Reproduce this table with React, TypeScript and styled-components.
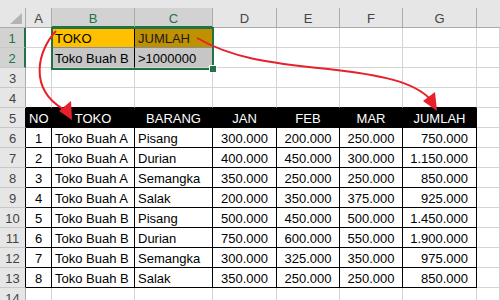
import styled, { createGlobalStyle } from "styled-components";

const GlobalStyle = createGlobalStyle`
  html, body {
    margin: 0;
    padding: 0;
    background: #ffffff;
    overflow: hidden;
  }
  body {
    font-family: "Liberation Sans", Arial, sans-serif;
  }
`;

type Align = "left" | "center" | "right";

type CellData = {
  text?: string;
  align?: Align;
  bg?: string;
  color?: string;
  right?: string;
  bottom?: string;
};

const COLS = ["A", "B", "C", "D", "E", "F", "G", ""];
const SELECTED_COLS = ["B", "C"];

const rows: { values: string[] }[] = [
  { values: ["1", "Toko Buah A", "Pisang", "300.000", "200.000", "250.000", "750.000"] },
  { values: ["2", "Toko Buah A", "Durian", "400.000", "450.000", "300.000", "1.150.000"] },
  { values: ["3", "Toko Buah A", "Semangka", "350.000", "250.000", "250.000", "850.000"] },
  { values: ["4", "Toko Buah A", "Salak", "200.000", "350.000", "375.000", "925.000"] },
  { values: ["5", "Toko Buah B", "Pisang", "500.000", "450.000", "500.000", "1.450.000"] },
  { values: ["6", "Toko Buah B", "Durian", "750.000", "600.000", "550.000", "1.900.000"] },
  { values: ["7", "Toko Buah B", "Semangka", "300.000", "325.000", "350.000", "975.000"] },
  { values: ["8", "Toko Buah B", "Salak", "350.000", "250.000", "250.000", "850.000"] },
];

const headers = ["NO", "TOKO", "BARANG", "JAN", "FEB", "MAR", "JUMLAH"];
const dataAlign: Align[] = ["center", "left", "left", "center", "center", "center", "right"];

function buildSheet(): CellData[][] {
  const empty = (): CellData[] => COLS.map(() => ({}));
  const sheet: CellData[][] = [];

  const r1 = empty();
  r1[1] = { text: "TOKO", bg: "#ffc000", right: "#000", bottom: "#8c8c8c" };
  r1[2] = { text: "JUMLAH", bg: "#bf9000", color: "#1a1a1a", bottom: "#8c8c8c" };
  sheet.push(r1);

  const r2 = empty();
  r2[1] = { text: "Toko Buah B", bg: "#c6c6c6", right: "#000" };
  r2[2] = { text: ">1000000", bg: "#c6c6c6" };
  sheet.push(r2);

  sheet.push(empty());
  const r4 = empty();
  for (let i = 0; i < 7; i++) r4[i] = { bottom: "#000" };
  sheet.push(r4);

  const r5 = empty();
  headers.forEach((h, i) => {
    r5[i] = { text: h, align: "center", bg: "#000", color: "#fff", right: "#000", bottom: "#000" };
  });
  sheet.push(r5);

  rows.forEach((row) => {
    const r = empty();
    row.values.forEach((v, i) => {
      r[i] = { text: v, align: dataAlign[i], right: "#000", bottom: "#000" };
    });
    sheet.push(r);
  });

  sheet.push(empty());
  return sheet;
}

export default function App() {
  const sheet = buildSheet();

  return (
    <>
      <GlobalStyle />
      <Sheet>
        <TopStrip />
        <Grid>
          <Corner>
            <CornerTriangle />
          </Corner>
          {COLS.map((c, i) => (
            <ColHead key={`h${i}`} $selected={SELECTED_COLS.includes(c)} $last={i === COLS.length - 1}>
              {c}
            </ColHead>
          ))}

          {sheet.map((row, r) => {
            const num = r + 1;
            const edge = num <= 2 ? "green" : num >= 5 && num <= 13 ? "black" : "gray";
            return [
              <RowHead key={`r${num}`} $selected={num <= 2} $edge={edge}>
                {num}
              </RowHead>,
              ...row.map((cell, c) => (
                <Cell
                  key={`c${num}-${c}`}
                  $align={cell.align ?? "left"}
                  $bg={cell.bg}
                  $color={cell.color}
                  $right={cell.right}
                  $bottom={cell.bottom}
                >
                  {cell.text}
                </Cell>
              )),
            ];
          })}
        </Grid>

        <Selection>
          <FillHandle />
        </Selection>

        <Arrows viewBox="0 0 500 300" width={500} height={300}>
          <path d="M56,31 C38,50 28,88 63,109" fill="none" stroke="#e8202a" strokeWidth={2} />
          <polygon points="59,111 71,101 72,120" fill="#e8202a" />
          <path
            d="M197,38 C232,58 268,63 328,69 C382,75 414,82 430,99"
            fill="none"
            stroke="#e8202a"
            strokeWidth={2}
          />
          <polygon points="423,101 435,92 437,111" fill="#e8202a" />
        </Arrows>
      </Sheet>
    </>
  );
}

const Sheet = styled.div`
  position: relative;
  width: 500px;
  height: 300px;
  overflow: hidden;
  background: #ffffff;
`;

const TopStrip = styled.div`
  height: 8px;
  background: #e6e6e6;
`;

const Grid = styled.div`
  display: grid;
  grid-template-columns: 26px 26px 83px 78px 64px 63px 63px 74px 1fr;
  grid-template-rows: 20px;
  grid-auto-rows: 20px;
  font-size: 13px;
`;

const Corner = styled.div`
  position: relative;
  background: #e6e6e6;
  border-right: 1px solid #ababab;
  border-bottom: 1px solid #ababab;
  box-sizing: border-box;
`;

const CornerTriangle = styled.div`
  position: absolute;
  right: 3px;
  bottom: 3px;
  width: 0;
  height: 0;
  border-left: 12px solid transparent;
  border-bottom: 11px solid #b4b4b4;
`;

const ColHead = styled.div<{ $selected?: boolean; $last?: boolean }>`
  box-sizing: border-box;
  display: flex;
  align-items: center;
  justify-content: center;
  padding-top: 2px;
  background: ${(p) => (p.$selected ? "#d2d2d2" : "#e6e6e6")};
  color: ${(p) => (p.$selected ? "#217346" : "#444444")};
  border-right: ${(p) => (p.$last ? "none" : "1px solid #ababab")};
  border-bottom: ${(p) => (p.$selected ? "2px solid #217346" : "1px solid #ababab")};
`;

const RowHead = styled.div<{ $selected?: boolean; $edge: "green" | "black" | "gray" }>`
  box-sizing: border-box;
  display: flex;
  align-items: center;
  justify-content: center;
  padding-top: 1px;
  background: ${(p) => (p.$selected ? "#d2d2d2" : "#e6e6e6")};
  color: ${(p) => (p.$selected ? "#217346" : "#444444")};
  border-bottom: 1px solid #c8c8c8;
  border-right: ${(p) =>
    p.$edge === "green" ? "2px solid #217346" : p.$edge === "black" ? "1px solid #000" : "1px solid #ababab"};
`;

const Cell = styled.div<{
  $align: Align;
  $bg?: string;
  $color?: string;
  $right?: string;
  $bottom?: string;
}>`
  box-sizing: border-box;
  padding: 2px ${(p) => (p.$align === "right" ? "8px" : "3px")} 0 3px;
  line-height: 17px;
  white-space: nowrap;
  overflow: hidden;
  text-align: ${(p) => p.$align};
  background: ${(p) => p.$bg ?? "#ffffff"};
  color: ${(p) => p.$color ?? "#000000"};
  border-right: 1px solid ${(p) => p.$right ?? "#d4d4d4"};
  border-bottom: 1px solid ${(p) => p.$bottom ?? "#d4d4d4"};
`;

const Selection = styled.div`
  position: absolute;
  left: 51px;
  top: 27px;
  width: 163px;
  height: 43px;
  box-sizing: border-box;
  border: 2px solid #217346;
  pointer-events: none;
`;

const FillHandle = styled.div`
  position: absolute;
  right: -5px;
  bottom: -5px;
  width: 6px;
  height: 6px;
  background: #217346;
  border: 1px solid #ffffff;
`;

const Arrows = styled.svg`
  position: absolute;
  left: 0;
  top: 0;
  pointer-events: none;
`;
